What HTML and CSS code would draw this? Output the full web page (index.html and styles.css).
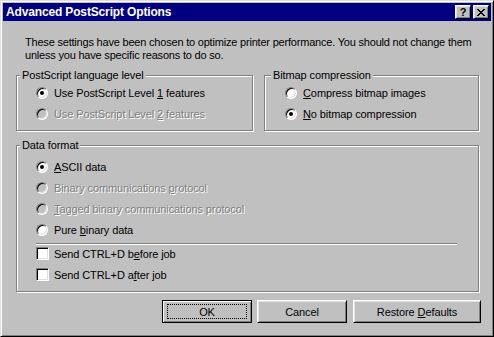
FILE: index.html
```html
<!DOCTYPE html>
<html lang="en">
<head>
  <meta charset="UTF-8" />
  <title>Advanced PostScript Options</title>
  <link rel="stylesheet" href="styles.css">
</head>
<body>
  <div class="window">
    <div class="titlebar">
      <span class="title">Advanced PostScript Options</span>
      <div class="caption-buttons">
        <span class="cap-btn help">?</span>
        <span class="cap-btn">
          <svg width="8" height="7" viewBox="0 0 8 7" shape-rendering="crispEdges">
            <rect x="0" y="0" width="2" height="1"/><rect x="6" y="0" width="2" height="1"/>
            <rect x="1" y="1" width="2" height="1"/><rect x="5" y="1" width="2" height="1"/>
            <rect x="2" y="2" width="4" height="1"/>
            <rect x="3" y="3" width="2" height="1"/>
            <rect x="2" y="4" width="4" height="1"/>
            <rect x="1" y="5" width="2" height="1"/><rect x="5" y="5" width="2" height="1"/>
            <rect x="0" y="6" width="2" height="1"/><rect x="6" y="6" width="2" height="1"/>
          </svg>
        </span>
      </div>
    </div>

    <div class="client">
      <p class="intro">These settings have been chosen to optimize printer performance. You should not change them<br>unless you have specific reasons to do so.</p>

      <div class="top-row">
        <div class="group group-level">
          <div class="group-title">PostScript language level</div>
          <div class="option"><span class="radio checked"></span><span>Use PostScript Level <u>1</u> features</span></div>
          <div class="option disabled"><span class="radio"></span><span>Use PostScript Level <u>2</u> features</span></div>
        </div>
        <div class="group group-bitmap">
          <div class="group-title">Bitmap compression</div>
          <div class="option"><span class="radio"></span><span><u>C</u>ompress bitmap images</span></div>
          <div class="option"><span class="radio checked"></span><span><u>N</u>o bitmap compression</span></div>
        </div>
      </div>

      <div class="group group-format">
        <div class="group-title">Data format</div>
        <div class="option"><span class="radio checked"></span><span><u>A</u>SCII data</span></div>
        <div class="option disabled"><span class="radio"></span><span>Binary communications <u>p</u>rotocol</span></div>
        <div class="option disabled"><span class="radio"></span><span><u>T</u>agged binary communications protocol</span></div>
        <div class="option"><span class="radio"></span><span>Pure <u>b</u>inary data</span></div>
        <div class="separator"></div>
        <div class="option"><span class="checkbox"></span><span>Send CTRL+D b<u>e</u>fore job</span></div>
        <div class="option"><span class="checkbox"></span><span>Send CTRL+D a<u>f</u>ter job</span></div>
      </div>

      <div class="buttons">
        <button class="btn default">OK</button>
        <button class="btn">Cancel</button>
        <button class="btn wide">Restore <u>D</u>efaults</button>
      </div>
    </div>
  </div>
</body>
</html>
```

FILE: styles.css
```css
* {
  box-sizing: border-box;
  margin: 0;
  padding: 0;
}

body {
  background: #c0c0c0;
  font-family: "Liberation Sans", Arial, sans-serif;
  font-size: 11px;
  letter-spacing: -0.1px;
  color: #000;
}

.window {
  width: 494px;
  height: 337px;
  background: #c0c0c0;
  border: 1px solid;
  border-color: #dfdfdf #000 #000 #dfdfdf;
  box-shadow: inset 1px 1px #fff, inset -1px -1px #808080;
  padding: 2px;
}

/* title bar */
.titlebar {
  height: 18px;
  background: #000080;
  color: #fff;
  display: flex;
  align-items: center;
  justify-content: space-between;
  padding: 0 2px 0 3px;
}

.title {
  font-weight: bold;
  font-size: 12px;
  letter-spacing: -0.15px;
}

.caption-buttons {
  display: flex;
  gap: 2px;
}

.cap-btn {
  width: 16px;
  height: 14px;
  background: #c0c0c0;
  border: 1px solid;
  border-color: #fff #000 #000 #fff;
  box-shadow: inset 1px 1px #dfdfdf, inset -1px -1px #808080;
  display: flex;
  align-items: center;
  justify-content: center;
  color: #000;
}

.cap-btn.help {
  font-weight: bold;
  font-size: 11px;
  line-height: 1;
}

/* client area */
.client {
  padding: 15px 12px 0 13px;
}

.intro {
  padding-left: 9px;
  line-height: 13px;
  white-space: nowrap;
  letter-spacing: -0.2px;
}

.top-row {
  display: flex;
  gap: 11px;
  margin-top: 13px;
}

.group {
  border: 1px solid #808080;
  box-shadow: inset 1px 1px #fff, 1px 1px #fff;
  padding-bottom: 6px;
}

.group-level {
  width: 237px;
}

.group-bitmap {
  width: 215px;
}

.group-title {
  width: fit-content;
  margin: -7px 0 0 3px;
  padding: 0 2px;
  line-height: 13px;
  background: #c0c0c0;
}

.group-bitmap .group-title {
  margin-left: 6px;
}

.option {
  display: flex;
  align-items: center;
  height: 21px;
  margin-left: 19px;
  white-space: nowrap;
}

.group-bitmap .option {
  margin-left: 20px;
}

.group-format {
  margin-top: 14px;
}

.group-format .group-title + .option {
  margin-top: 4px;
}

.option.disabled {
  color: #808080;
  text-shadow: 1px 1px 0 #fff;
}

.radio {
  position: relative;
  flex: none;
  width: 12px;
  height: 12px;
  margin-right: 6px;
  border-radius: 50%;
  border: 1px solid;
  border-color: #808080 #fff #fff #808080;
  box-shadow: inset 1px 1px #000, inset -1px -1px #dfdfdf;
  background: #fff;
}

.disabled .radio {
  background: #c0c0c0;
}

.radio.checked::after {
  content: "";
  position: absolute;
  left: 3px;
  top: 3px;
  width: 4px;
  height: 4px;
  border-radius: 50%;
  background: #000;
}

.checkbox {
  flex: none;
  width: 13px;
  height: 13px;
  margin-right: 5px;
  border: 1px solid;
  border-color: #808080 #fff #fff #808080;
  box-shadow: inset 1px 1px #000, inset -1px -1px #dfdfdf;
  background: #fff;
}

.separator {
  width: 421px;
  margin: 3px 0 -2px 19px;
  border-top: 1px solid #808080;
  border-bottom: 1px solid #fff;
}

/* buttons */
.buttons {
  display: flex;
  justify-content: flex-end;
  margin: 8px -2px 0 0;
}

.btn {
  position: relative;
  width: 90px;
  height: 23px;
  margin-left: 5px;
  background: #c0c0c0;
  border: 1px solid;
  border-color: #fff #000 #000 #fff;
  box-shadow: inset 1px 1px #dfdfdf, inset -1px -1px #808080;
  font-family: "Liberation Sans", Arial, sans-serif;
  font-size: 11px;
  letter-spacing: -0.1px;
  color: #000;
}

.btn.wide {
  width: 128px;
  margin-left: 6px;
}

.btn.default {
  border-color: #000;
  box-shadow: inset 1px 1px #fff, inset -1px -1px #808080;
}

.btn.default::after {
  content: "";
  position: absolute;
  inset: 3px 4px;
  border: 1px dotted #000;
}
```
